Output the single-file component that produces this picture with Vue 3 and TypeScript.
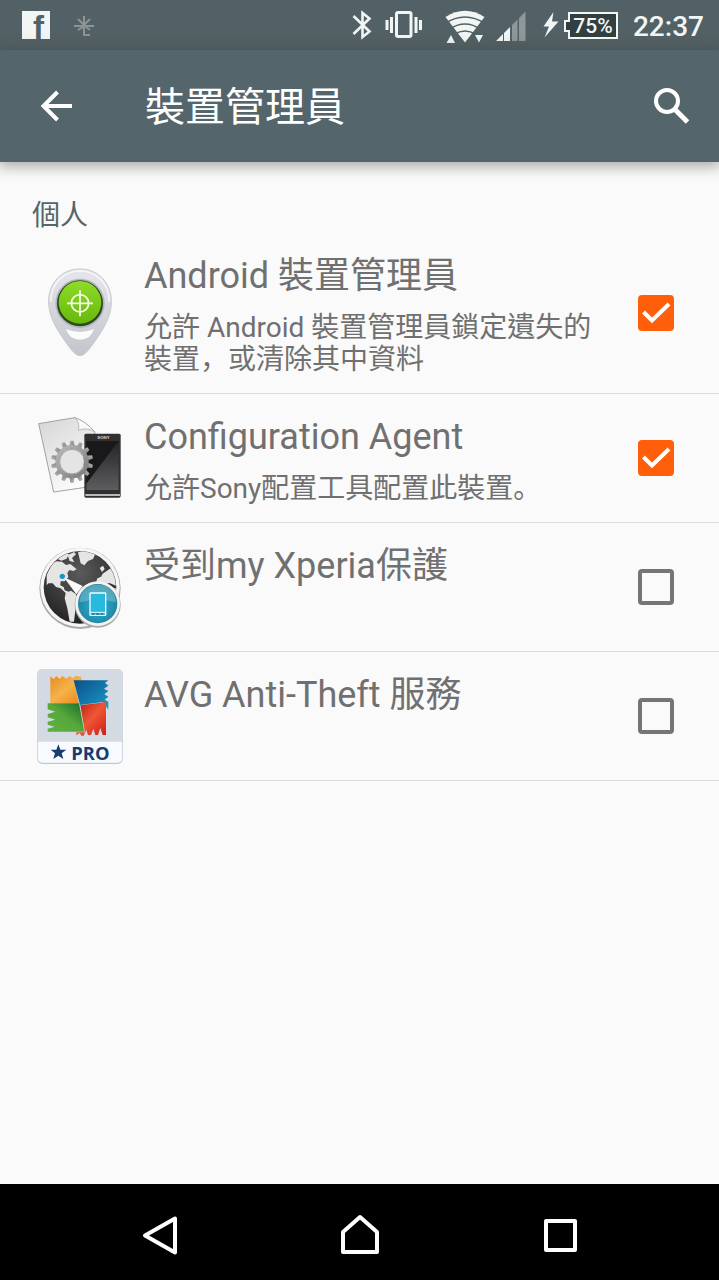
<script setup lang="ts">
import { ref } from 'vue'

interface Admin {
  id: string
  title: string
  summary: string
  viewBox: string
  active: boolean
}

const admins = ref<Admin[]>([
  { id: 'android', title: 'Android 裝置管理員', summary: '允許 Android 裝置管理員鎖定遺失的裝置，或清除其中資料', viewBox: '0 9 300 330', active: true },
  { id: 'config', title: 'Configuration Agent', summary: '允許Sony配置工具配置此裝置。', viewBox: '0 -6 300 330', active: true },
  { id: 'xperia', title: '受到my Xperia保護', summary: '', viewBox: '0 -9 300 330', active: false },
  { id: 'avg', title: 'AVG Anti-Theft 服務', summary: '', viewBox: '0 6 300 330', active: false },
])

const gearAngles = Array.from({ length: 14 }, (_, i) => (i * 360) / 14)

// Full-width punctuation is set apart so that it can sit on the baseline.
const parts = (text: string): string[] => text.split(/([，。])/).filter(Boolean)
const isMark = (part: string): boolean => part === '，' || part === '。'
</script>

<template>
  <div class="screen">
    <div class="status">
      <div class="notices">
        <svg class="fb-logo" width="28" height="28" viewBox="0 0 28 28" role="img" aria-label="Facebook">
          <rect width="28" height="28" fill="#f1f6f5" />
          <text x="11" y="28" class="fb">f</text>
        </svg>
        <svg width="22" height="24" viewBox="0 0 22 24" fill="none" stroke="#8d9493" stroke-width="2">
          <path d="M1 13H21M11 3V21M5 6l6 6M17 6l-6 6M5 17l5-3M17 17l-4-3M10 22h7" />
        </svg>
      </div>
      <div class="system">
        <svg width="32" height="50" viewBox="346 0 32 50" fill="none" stroke="#f1f6f5" stroke-width="2.6">
          <path d="M353.500 16L369.500 31.500L362.500 37V13L369.500 18.500L353.500 34" />
        </svg>
        <svg width="52" height="50" viewBox="378 0 52 50" fill="#f1f6f5">
          <rect x="396.500" y="12.500" width="14.500" height="24" rx="1.500" fill="none" stroke="#f1f6f5" stroke-width="3" />
          <path d="M385.500 20h3v10h-3zM390 17h3v16h-3zM414.500 17h3v16h-3zM419 20h3v10h-3z" />
        </svg>
        <svg width="60" height="50" viewBox="430 0 60 50">
          <path d="M465 42.500L445.500 17Q465 4.500 484.500 17Z" fill="#f1f6f5" />
          <path d="M445 23.500Q465 10.500 485 23.500M449 29.500Q465 18.500 481 29.500M454 34.500Q465 27.500 476 34.500" fill="none" stroke="#526165" stroke-width="1.6" />
          <path d="M446.500 43l4.500-8l4 8zM475 35h8l-4 7.500z" fill="#f1f6f5" />
        </svg>
        <svg width="44" height="50" viewBox="490 0 44 50">
          <path d="M496 41l7-7v7zM504 33l6-6v14h-6z" fill="#f1f6f5" />
          <path d="M512 25l5.500-5.500V41H512zM519 18l6.500-6.500V41H519z" fill="#8d9999" />
        </svg>
        <svg width="28" height="50" viewBox="534 0 28 50">
          <path d="M553.500 12L543.500 26.500H549L544.500 37.500L558.500 21.500H552Z" fill="#f1f6f5" />
        </svg>
        <span class="battery">75%</span>
        <time class="clock">22:37</time>
      </div>
    </div>

    <header class="bar">
      <button class="icon-btn" type="button" aria-label="返回">
        <svg width="36" height="36" viewBox="0 0 36 36" fill="none" stroke="#fff" stroke-width="4">
          <path d="M34 18H6M19.500 4L5.500 18L19.500 32" />
        </svg>
      </button>
      <h1>裝置管理員</h1>
      <button class="icon-btn" type="button" aria-label="搜尋">
        <svg width="40" height="40" viewBox="0 0 40 40" fill="none" stroke="#fff">
          <circle cx="16" cy="15" r="11" stroke-width="4" />
          <path d="M24.500 24L36.500 36" stroke-width="5" />
        </svg>
      </button>
    </header>

    <main>
      <h2>個人</h2>
      <ul>
        <li v-for="a in admins" :key="a.id">
          <label class="row" :for="a.id">
            <svg class="app-icon" :viewBox="a.viewBox" aria-hidden="true">
              <template v-if="a.id === 'android'">
                <defs>
                  <linearGradient id="pin" x1="0" y1="0" x2="0" y2="1">
                    <stop offset="0" stop-color="#e6e7ec" />
                    <stop offset="1" stop-color="#c3c5cd" />
                  </linearGradient>
                  <linearGradient id="green" x1="0" y1="0" x2="0" y2="1">
                    <stop offset="0" stop-color="#8edb28" />
                    <stop offset="1" stop-color="#67b90c" />
                  </linearGradient>
                </defs>
                <path d="M150 42C95 42 56 84 56 140C56 178 73 211 96 245C115 272 132 301 150 302C168 301 185 272 204 245C227 211 244 178 244 140C244 84 205 42 150 42Z" fill="url(#pin)" stroke="#c5c7cc" stroke-width="3" />
                <path d="M62 140C62 85 102 48 150 48S238 85 238 140" fill="none" stroke="#f6f6f9" stroke-width="5" />
                <path d="M108 222Q150 240 192 222Q184 252 150 254Q116 252 108 222Z" fill="#fbfbfc" />
                <circle cx="150" cy="145" r="74" fill="#b2b5bd" />
                <circle cx="150" cy="145" r="69" fill="#2c491b" />
                <circle cx="150" cy="142" r="64" fill="url(#green)" />
                <circle cx="150" cy="145" r="26" fill="none" stroke="#f7ffe9" stroke-width="5" />
                <path d="M111 145H189M150 106V184" stroke="#f7ffe9" stroke-width="5" />
              </template>

              <template v-else-if="a.id === 'config'">
                <defs>
                  <linearGradient id="paper" x1="0" y1="0" x2="0.6" y2="1">
                    <stop offset="0" stop-color="#d5d5d5" />
                    <stop offset="1" stop-color="#fdfdfd" />
                  </linearGradient>
                  <linearGradient id="metal" x1="0" y1="0" x2="1" y2="1">
                    <stop offset="0" stop-color="#b8b8b8" />
                    <stop offset="1" stop-color="#7c7c7c" />
                  </linearGradient>
                  <linearGradient id="glass" x1="0" y1="0" x2="0" y2="1">
                    <stop offset="0" stop-color="#2c2c2e" />
                    <stop offset="1" stop-color="#8a8a8d" />
                  </linearGradient>
                </defs>
                <path d="M26 56L134 38Q165 48 194 80L214 240L71 261Z" fill="url(#paper)" stroke="#a2a2a2" stroke-width="3" />
                <path d="M134 38Q151 52 145 76Q170 66 194 80Q166 48 134 38Z" fill="#fafafa" stroke="#9d9d9d" stroke-width="2" />
                <rect x="163" y="86" width="109" height="192" rx="5" fill="#303032" />
                <rect x="166" y="267" width="104" height="6" fill="#b9b9b9" />
                <rect x="169" y="108" width="97" height="147" fill="#19191b" />
                <path d="M266 108V255H169V236Z" fill="url(#glass)" opacity=".6" />
                <text x="202" y="103" class="sony">SONY</text>
                <g fill="url(#metal)">
                  <path v-for="g in gearAngles" :key="g" d="M118 126L121 107H131L134 126Z" :transform="`rotate(${g} 126 170)`" />
                </g>
                <circle cx="126" cy="170" r="44" fill="none" stroke="url(#metal)" stroke-width="12" />
                <circle cx="126" cy="170" r="37" fill="#e4e4e4" stroke="#777" stroke-width="2" />
              </template>

              <template v-else-if="a.id === 'xperia'">
                <defs>
                  <radialGradient id="sea" cx=".5" cy=".3" r=".7">
                    <stop offset="0" stop-color="#5b5b5b" />
                    <stop offset="1" stop-color="#242426" />
                  </radialGradient>
                  <radialGradient id="cyan" cx=".5" cy=".55" r=".6">
                    <stop offset="0" stop-color="#24b7df" />
                    <stop offset="1" stop-color="#237b94" />
                  </radialGradient>
                  <clipPath id="globe"><circle cx="150" cy="157" r="108" /></clipPath>
                </defs>
                <circle cx="150" cy="160" r="122" fill="#a9a9a9" />
                <circle cx="150" cy="157" r="119" fill="#f6f6f6" />
                <circle cx="150" cy="157" r="109" fill="url(#sea)" />
                <g clip-path="url(#globe)" fill="#e5e5e3">
                  <path d="M50 120L66 86L78 79L96 80L108 90L121 87L132 96L140 103L130 108L118 105L112 114L115 126L104 139L92 139L91 151L101 156L104 166L116 170L123 167L138 178L142 200L136 226L132 260H119L112 220L104 190L107 174L92 160L78 156L68 145L55 145L50 151Z" />
                  <path d="M76 69L95 57L117 56L110 71L94 77ZM113 61L132 51L138 58L126 69L133 82L119 78ZM144 52L166 44L197 55L189 72L174 78L163 91L152 85ZM209 99L219 92L224 102L216 111ZM218 116L244 98L262 131L264 155L238 144L227 148L210 132ZM201 131L212 125L231 133V151L252 160L266 160V190H220L196 159Z" />
                </g>
                <path d="M101 126L158 153L139 178Z" fill="#fafafa" />
                <circle cx="97" cy="124" r="8" fill="#1596c7" />
                <circle cx="203" cy="209" r="69" fill="#a7abac" />
                <circle cx="203" cy="206" r="67" fill="#f2f4f4" />
                <circle cx="203" cy="206" r="59" fill="url(#cyan)" />
                <path d="M148 202Q153 150 203 149T258 202Q205 188 148 202Z" fill="#91ccda" opacity=".45" />
                <rect x="180" y="174" width="47" height="67" rx="2" fill="#28b9df" stroke="#eefbff" stroke-width="4" />
                <path d="M180 232H227" stroke="#eefbff" stroke-width="3" />
                <path d="M185 237h9m4 0h9m4 0h9" stroke="#1b7a97" stroke-width="4" />
              </template>

              <template v-else>
                <defs>
                  <linearGradient id="orange" x1="0" y1="0" x2="1" y2="1">
                    <stop offset="0" stop-color="#e78b20" />
                    <stop offset=".5" stop-color="#f5b24a" />
                    <stop offset="1" stop-color="#e98519" />
                  </linearGradient>
                  <linearGradient id="blue" x1="0" y1="0" x2="1" y2="1">
                    <stop offset="0" stop-color="#0a4f88" />
                    <stop offset="1" stop-color="#1c9cc9" />
                  </linearGradient>
                  <linearGradient id="leaf" x1="0" y1="1" x2="1" y2="0">
                    <stop offset="0" stop-color="#5fb043" />
                    <stop offset=".5" stop-color="#56a83a" />
                    <stop offset="1" stop-color="#176b2b" />
                  </linearGradient>
                  <linearGradient id="red" x1="0" y1="0" x2="1" y2="1">
                    <stop offset="0" stop-color="#b51718" />
                    <stop offset=".5" stop-color="#ef5633" />
                    <stop offset="1" stop-color="#cc1d18" />
                  </linearGradient>
                </defs>
                <rect x="22" y="31" width="256" height="284" rx="15" fill="#bbc8d4" />
                <rect x="23" y="30" width="254" height="281" rx="14" fill="#d4dae2" />
                <path d="M24 248H276V298Q276 311 262 311H38Q24 311 24 298Z" fill="#f7fbff" />
                <path d="M61 52L71 61L79 51L89 59L98 51L109 59L119 51L128 58L137 50L154 53V66H132L146 132H61Z" fill="url(#orange)" />
                <path d="M131 64H235L225 72L235 80L222 89L235 96L223 106L235 113L224 122L235 128V152L227 140L219 129L150 138Z" fill="url(#blue)" />
                <path d="M53 133H147L163 218H53V209L74 203L53 197V188L76 182L53 175V165L76 158L53 151Z" fill="url(#leaf)" />
                <path d="M151 139L228 129V228H218L211 207L204 228H196L190 209L183 228H174L169 213L161 230H154L149 222L139 229V220H165Z" fill="url(#red)" />
                <path d="M85 256L91 272H109L95 283L100 300L85 290L70 300L75 283L62 272H79Z" fill="#183b70" />
                <text x="124" y="302" class="pro">PRO</text>
              </template>
            </svg>
            <span class="copy">
              <span class="title">{{ a.title }}</span>
              <span class="summary"><span v-for="(p, i) in parts(a.summary)" :key="i" :class="{ mark: isMark(p) }">{{ p }}</span></span>
            </span>
            <span class="check">
              <input :id="a.id" v-model="a.active" type="checkbox" />
              <svg v-if="a.active" width="36" height="36" viewBox="0 0 36 36" fill="none" stroke="#fff" stroke-width="4" aria-hidden="true">
                <path d="M5.500 17L14 25.500L31 9" />
              </svg>
            </span>
          </label>
        </li>
      </ul>
    </main>

    <nav>
      <button type="button" aria-label="返回">
        <svg width="40" height="44" viewBox="0 0 40 44"><path d="M5 21.500L35 4.500V38.500Z" /></svg>
      </button>
      <button type="button" aria-label="主畫面">
        <svg width="40" height="44" viewBox="0 0 40 44"><path d="M3 38V18L20 3L37 18V38Z" /></svg>
      </button>
      <button type="button" aria-label="最近使用">
        <svg width="40" height="44" viewBox="0 0 40 44"><path d="M6 7H35V36H6Z" /></svg>
      </button>
    </nav>
  </div>
</template>

<style>
body {
  margin: 0;
  background: #fafafa;
}
</style>

<style scoped>
.screen {
  display: flex;
  flex-direction: column;
  min-height: 100vh;
  background: #fafafa;
  color: #707070;
  font-family: Roboto, "Noto Sans CJK TC", sans-serif;
}
svg {
  display: block;
  flex: none;
}
button {
  display: grid;
  place-items: center;
  padding: 0;
  border: 0;
  background: none;
  cursor: pointer;
}
.status {
  display: flex;
  align-items: center;
  justify-content: space-between;
  height: 50px;
  padding: 0 15px 0 22px;
  background: #526165;
  color: #f1f6f5;
}
.notices,
.system {
  display: flex;
  align-items: center;
}
.notices {
  gap: 23px;
}
.fb-logo {
  overflow: visible;
}
.fb {
  font: 700 33px "Liberation Sans", sans-serif;
  fill: #526165;
}
.battery {
  position: relative;
  box-sizing: border-box;
  width: 50px;
  height: 27px;
  margin: 0 15px 0 6px;
  border: 2px solid #f1f6f5;
  background: #313f41;
  font-size: 21px;
  font-weight: 500;
  line-height: 24px;
  text-align: center;
}
.battery::before {
  content: "";
  position: absolute;
  top: 6px;
  left: -6px;
  box-sizing: border-box;
  width: 6px;
  height: 12px;
  border: 2px solid #f1f6f5;
  border-right: 0;
  background: #313f41;
}
.clock {
  padding-top: 4px;
  font-size: 28px;
  font-weight: 500;
  line-height: 46px;
}
.bar {
  display: flex;
  align-items: center;
  height: 112px;
  padding: 0 24px 0 32px;
  background: #54666b;
  box-shadow: 0 2px 14px 2px rgba(60, 60, 50, 0.45);
  color: #fff;
}
.icon-btn {
  width: 48px;
  height: 48px;
}
h1 {
  flex: 1;
  margin: 0 0 0 65px;
  padding-top: 4px;
  font-size: 40px;
  font-weight: 400;
  line-height: 48px;
}
main {
  flex: 1;
}
h2 {
  margin: 0;
  padding: 38px 32px 1px;
  color: #54666b;
  font-size: 28px;
  font-weight: 400;
  line-height: 32px;
}
ul {
  margin: 0;
  padding: 0;
  list-style: none;
}
li {
  border-bottom: 1px solid #dcdcdc;
}
.row {
  display: flex;
  align-items: center;
  padding: 0 45px 0 30px;
  cursor: pointer;
}
.app-icon {
  width: 100px;
  height: 110px;
}
.sony {
  font: 700 13px "Liberation Sans", sans-serif;
  fill: #ddd;
}
.pro {
  font: 700 55px "Open Sans", sans-serif;
  fill: #183b70;
}
.copy {
  display: flex;
  flex: 1;
  flex-direction: column;
  gap: 13px;
  min-width: 0;
  padding: 20px 32px 17px 14px;
}
.title {
  font-size: 36px;
  line-height: 46px;
}
.summary {
  min-height: 32px;
  font-size: 28px;
  line-height: 32px;
}
.mark {
  font-family: Roboto, "Noto Sans CJK JP", sans-serif;
}
.check {
  display: grid;
  flex: none;
}
.check > * {
  grid-area: 1 / 1;
}
.check svg {
  z-index: 1;
  pointer-events: none;
}
input {
  appearance: none;
  box-sizing: border-box;
  width: 36px;
  height: 36px;
  margin: 0;
  border: 4px solid #757575;
  border-radius: 4px;
}
input:checked {
  border-color: #ff5f0a;
  background: #ff5f0a;
}
nav {
  display: flex;
  justify-content: center;
  height: 96px;
  background: #000;
}
nav button {
  width: 200px;
  padding-top: 8px;
}
nav svg {
  fill: none;
  stroke: #fff;
  stroke-width: 4;
  stroke-linejoin: round;
}
</style>
